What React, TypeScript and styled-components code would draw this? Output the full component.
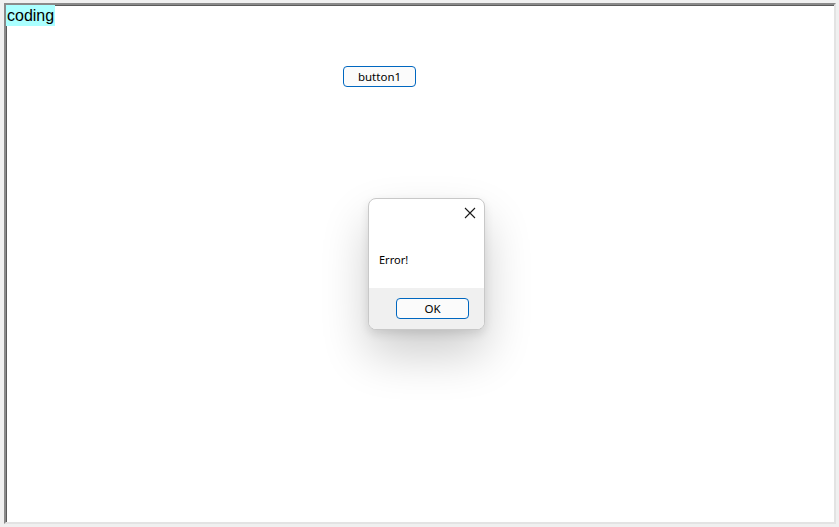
import { FC } from 'react'
import styled, { createGlobalStyle } from 'styled-components'

const GlobalStyle = createGlobalStyle`
  html, body {
    margin: 0;
    padding: 0;
    background: #f0f0f0;
  }
  #root {
    padding: 3px 3px 3px 4px;
    box-sizing: border-box;
    height: 527px;
    width: 839px;
  }
`

const Frame = styled.div`
  position: relative;
  box-sizing: border-box;
  width: 832px;
  height: 521px;
  background: #ffffff;
  border-style: solid;
  border-width: 2px;
  border-color: #8a8a8a #e3e3e3 #e3e3e3 #8a8a8a;
  box-shadow: inset 1px 1px 0 #5a5a5a, inset -1px -1px 0 #ffffff;
  overflow: hidden;
`

const Label = styled.span`
  display: inline-block;
  background: #aaffff;
  color: #000;
  font-family: 'Liberation Sans', Arial, sans-serif;
  font-size: 16px;
  line-height: 21px;
  padding: 0 1px;
`

const ButtonRow = styled.div`
  padding: 40px 0 0 337px;
`

const WinButton = styled.button`
  box-sizing: border-box;
  width: 73px;
  height: 21px;
  padding: 0;
  border: 1px solid #0067c0;
  border-radius: 4px;
  background: #fbfbfb;
  color: #000;
  font-family: 'Noto Sans', 'Open Sans', sans-serif;
  font-size: 11.5px;
  line-height: 19px;
`

const Dialog = styled.div`
  position: absolute;
  left: 362px;
  top: 193px;
  width: 117px;
  height: 132px;
  box-sizing: border-box;
  border: 1px solid #c8c8c8;
  border-radius: 8px;
  background: #ffffff;
  overflow: hidden;
  display: flex;
  flex-direction: column;
  box-shadow: 0 24px 48px rgba(0, 0, 0, 0.2), 0 4px 10px rgba(0, 0, 0, 0.1);
`

const DialogBody = styled.div`
  height: 89px;
  display: flex;
  flex-direction: column;
`

const TitleBar = styled.div`
  display: flex;
  justify-content: flex-end;
  padding: 8px 8px 0 0;
  height: 22px;
  box-sizing: border-box;
`

const CloseIcon = styled.svg`
  width: 12px;
  height: 12px;
`

const Message = styled.div`
  padding: 31px 0 0 10px;
  font-family: 'Noto Sans', 'Open Sans', sans-serif;
  font-size: 11px;
  line-height: 16px;
  color: #000;
`

const Footer = styled.div`
  flex: 1;
  background: #f0f0f0;
  padding: 10px 0 0 27px;
`

const App: FC = () => (
  <>
    <GlobalStyle />
    <Frame>
      <Label>coding</Label>
      <ButtonRow>
        <WinButton>button1</WinButton>
      </ButtonRow>
      <Dialog>
        <DialogBody>
          <TitleBar>
            <CloseIcon viewBox="0 0 12 12">
              <path d="M1 1 L11 11 M11 1 L1 11" stroke="#1a1a1a" strokeWidth="1.1" fill="none" />
            </CloseIcon>
          </TitleBar>
          <Message>Error!</Message>
        </DialogBody>
        <Footer>
          <WinButton>OK</WinButton>
        </Footer>
      </Dialog>
    </Frame>
  </>
)

export default App
